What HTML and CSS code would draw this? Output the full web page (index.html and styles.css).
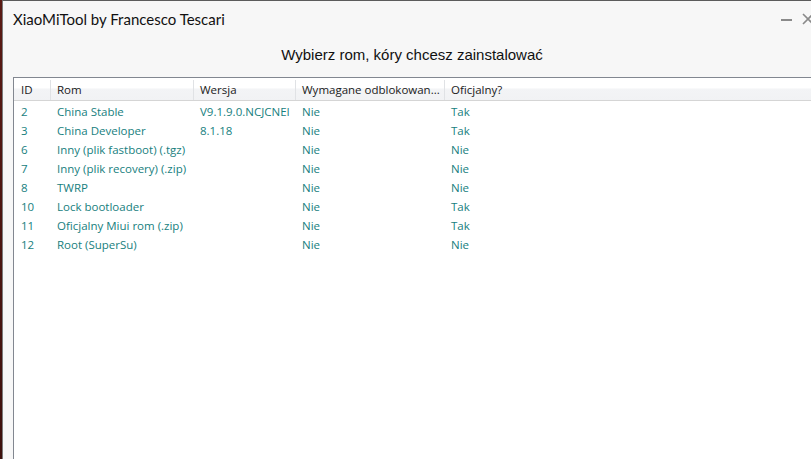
FILE: index.html
```html
<!DOCTYPE html>
<html lang="pl">
<head>
    <meta charset="UTF-8">
    <title>XiaoMiTool by Francesco Tescari</title>
    <link rel="stylesheet" href="styles.css">
</head>
<body>
    <div class="desktop"></div>
    <div class="window">
        <div class="titlebar">
            <span class="title">XiaoMiTool by Francesco Tescari</span>
            <div class="controls">
                <span class="ctrl min"></span>
                <svg class="ctrl close" width="12" height="12" viewBox="0 0 12 12">
                    <path d="M1 1 L11 11 M11 1 L1 11" stroke="#8a8a8a" stroke-width="1.6"/>
                </svg>
            </div>
        </div>
        <h1 class="heading">Wybierz rom, kóry chcesz zainstalować</h1>
        <div class="list">
            <div class="row head">
                <div class="cell">ID</div>
                <div class="cell">Rom</div>
                <div class="cell">Wersja</div>
                <div class="cell">Wymagane odblokowan...</div>
                <div class="cell">Oficjalny?</div>
            </div>
            <div class="row"><div class="cell">2</div><div class="cell">China Stable</div><div class="cell">V9.1.9.0.NCJCNEI</div><div class="cell">Nie</div><div class="cell">Tak</div></div>
            <div class="row"><div class="cell">3</div><div class="cell">China Developer</div><div class="cell">8.1.18</div><div class="cell">Nie</div><div class="cell">Tak</div></div>
            <div class="row"><div class="cell">6</div><div class="cell">Inny (plik fastboot) (.tgz)</div><div class="cell"></div><div class="cell">Nie</div><div class="cell">Nie</div></div>
            <div class="row"><div class="cell">7</div><div class="cell">Inny (plik recovery) (.zip)</div><div class="cell"></div><div class="cell">Nie</div><div class="cell">Nie</div></div>
            <div class="row"><div class="cell">8</div><div class="cell">TWRP</div><div class="cell"></div><div class="cell">Nie</div><div class="cell">Nie</div></div>
            <div class="row"><div class="cell">10</div><div class="cell">Lock bootloader</div><div class="cell"></div><div class="cell">Nie</div><div class="cell">Tak</div></div>
            <div class="row"><div class="cell">11</div><div class="cell">Oficjalny Miui rom (.zip)</div><div class="cell"></div><div class="cell">Nie</div><div class="cell">Tak</div></div>
            <div class="row"><div class="cell">12</div><div class="cell">Root (SuperSu)</div><div class="cell"></div><div class="cell">Nie</div><div class="cell">Nie</div></div>
        </div>
    </div>
</body>
</html>
```

FILE: styles.css
```css
html, body {
    margin: 0;
    height: 100%;
    overflow: hidden;
}
body {
    display: flex;
    width: 811px;
    height: 459px;
    background-color: #4a1512;
}
.desktop {
    width: 2px;
    flex-shrink: 0;
    background: linear-gradient(#5a1a14, #3c100c);
}
.window {
    flex-shrink: 0;
    width: 860px;
    height: 459px;
    box-sizing: border-box;
    background-color: #f7f7f7;
    border-left: 1px solid #7a7a7a;
    border-top: 1px solid #5c5c5c;
    display: flex;
    flex-direction: column;
}
.titlebar {
    display: flex;
    align-items: center;
    height: 36px;
    padding-left: 10px;
}
.title {
    width: 768px;
    font-family: Lato, sans-serif;
    font-size: 15px;
    color: #111;
}
.controls {
    display: flex;
    align-items: center;
    gap: 10px;
}
.ctrl.min {
    width: 11px;
    height: 2px;
    margin-top: 2px;
    background-color: #8a8a8a;
}
.heading {
    margin: 7px 0 0 0;
    width: 818px;
    text-align: center;
    font-family: "Liberation Sans", Arial, sans-serif;
    font-weight: normal;
    font-size: 15px;
    color: #111;
    height: 33px;
    line-height: 22px;
}
.list {
    margin-left: 10px;
    flex: 1;
    background-color: #fff;
    border-left: 1px solid #828790;
    border-top: 1px solid #828790;
    font-family: "Open Sans", sans-serif;
    font-size: 11.5px;
}
.row {
    display: grid;
    grid-template-columns: 36px 143px 102px 149px 1fr;
    height: 19px;
    line-height: 19px;
    color: #17807e;
}
.row.head {
    height: 23px;
    line-height: 20px;
    box-sizing: border-box;
    padding-top: 2px;
    margin-bottom: 1px;
    color: #1a1a1a;
    background: linear-gradient(#ffffff 0, #ffffff 45%, #f3f4f6 50%, #f1f2f4 100%);
    border-bottom: 1px solid #d5d5d5;
}
.cell {
    padding-left: 7px;
    white-space: nowrap;
    overflow: hidden;
}
.row.head .cell + .cell {
    border-left: 1px solid #e0e2e5;
    padding-left: 6px;
}
.row:not(.head) .cell + .cell {
    border-left: 1px solid transparent;
    padding-left: 6px;
}
```
